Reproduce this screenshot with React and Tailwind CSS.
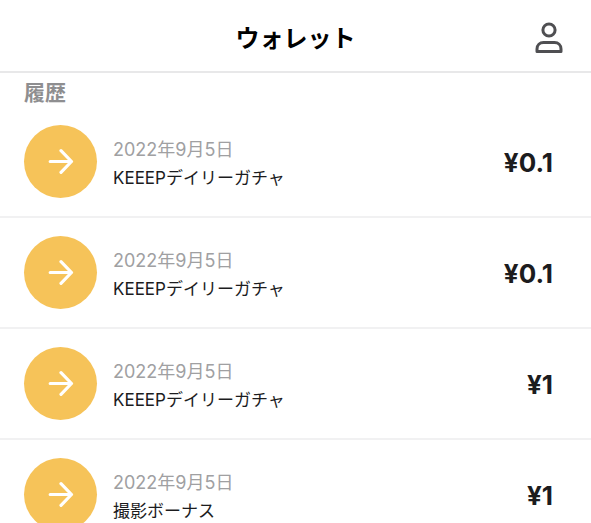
const history = [
  { id: 1, date: '2022年9月5日', title: 'KEEEPデイリーガチャ', amount: '¥0.1' },
  { id: 2, date: '2022年9月5日', title: 'KEEEPデイリーガチャ', amount: '¥0.1' },
  { id: 3, date: '2022年9月5日', title: 'KEEEPデイリーガチャ', amount: '¥1' },
  { id: 4, date: '2022年9月5日', title: '撮影ボーナス', amount: '¥1' },
]

function ProfileIcon() {
  return (
    <svg viewBox="0 0 28 32" className="w-7 h-8" fill="none" stroke="#4f4f52" strokeWidth="3" strokeLinejoin="round">
      <circle cx="14" cy="8" r="6.1" />
      <path d="M2 29.500v-2.500c0-4 2.800-6.500 6.500-6.500h11c3.700 0 6.500 2.500 6.500 6.500v2.500z" />
    </svg>
  )
}

function ArrowIcon() {
  return (
    <svg viewBox="0 0 26 26" className="w-[26px] h-[26px]" fill="none" stroke="white" strokeWidth="3.2" strokeLinecap="round" strokeLinejoin="round">
      <path d="M2.200 12.500h21.300M13 1.700L23.500 12.500L13 23.300" />
    </svg>
  )
}

function HistoryRow({ item }) {
  return (
    <li className="flex items-center pl-6 pr-[38px] py-[18px] border-b-2 border-[#f1f1f2]">
      <div className="w-[73px] h-[73px] shrink-0 rounded-full bg-[#f6c359] flex items-center justify-center">
        <ArrowIcon />
      </div>
      <div className="ml-4 pt-1 flex-1 min-w-0 leading-7">
        <p className="text-lg leading-7 text-[#a0a0a2]">{item.date}</p>
        <p className="text-[17px] text-[#1c1c1e] truncate">{item.title}</p>
      </div>
      <p className="pt-[2px] text-[#1c1c1e] text-[26px] leading-8 font-bold">{item.amount}</p>
    </li>
  )
}

export default function App() {
  return (
    <div className="h-screen overflow-hidden bg-white font-['Inter','Noto_Sans_CJK_JP',sans-serif]" lang="ja">
      <header className="grid grid-cols-[1fr_auto_1fr] items-center h-[73px] px-7 border-b-2 border-[#e8e8e9]">
        <h1 className="col-start-2 pt-[6px] text-2xl font-bold text-black">ウォレット</h1>
        <button aria-label="プロフィール" className="justify-self-end pt-1">
          <ProfileIcon />
        </button>
      </header>

      <main>
        <h2 className="px-6 pt-[6px] text-[21px] leading-7 font-bold text-[#8e8e90]">履歴</h2>
        <ul>
          {history.map(item => (
            <HistoryRow key={item.id} item={item} />
          ))}
        </ul>
      </main>
    </div>
  )
}
